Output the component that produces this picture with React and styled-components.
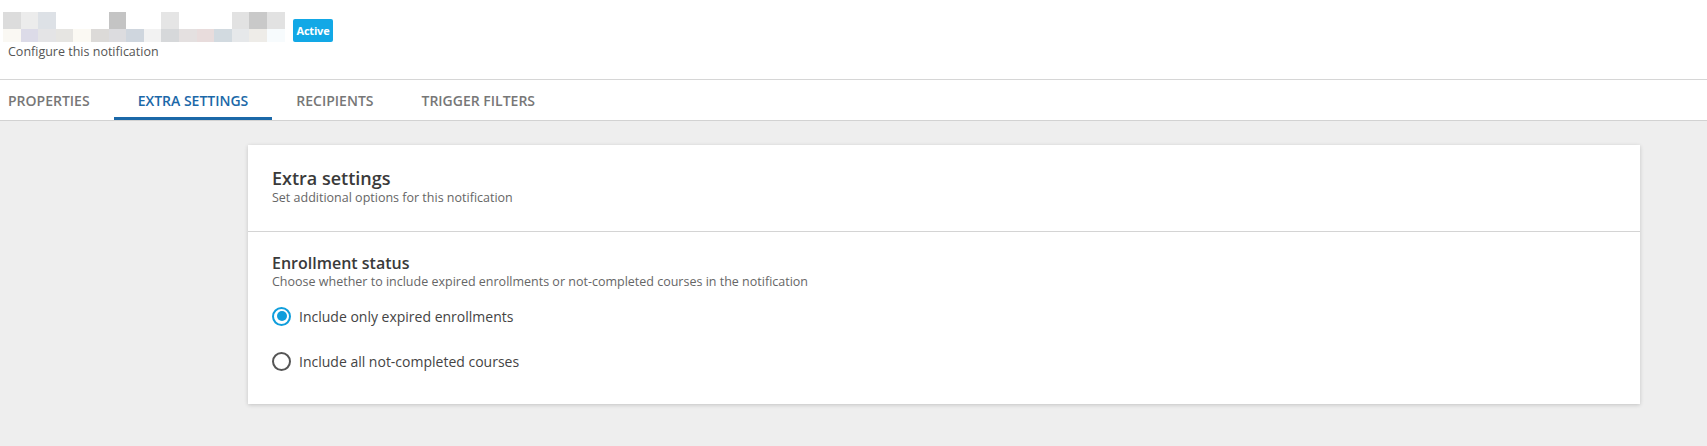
import styled, { createGlobalStyle } from 'styled-components'

const GlobalStyle = createGlobalStyle`
body {
  margin: 0;
  background: #eeeeee;
  font-family: "Open Sans", "Noto Sans", sans-serif;
  color: #333;
}
#root {
  min-height: 446px;
}
`

const Page = styled.div`
min-height: 446px;
background: #eeeeee;
`

const Header = styled.header`
background: #fff;
height: 67px;
padding: 12px 0 0 3px;
border-bottom: 1px solid #d6d6d6;
`

const TitleRow = styled.div`
display: flex;
align-items: flex-end;
gap: 8px;
`

// blurred title, drawn as a mosaic of tiles
const Mosaic = styled.div`
display: grid;
grid-template-columns: repeat(16, 17.6px);
grid-template-rows: 17px 13px;
`

const Tile = styled.span`
background: ${p => p.$c};
`

const Badge = styled.span`
display: inline-flex;
align-items: center;
height: 23px;
padding: 0 4px;
background: #12a8e6;
color: #fff;
font-size: 11px;
font-weight: 700;
letter-spacing: -0.2px;
border-radius: 2px;
`

const Subtitle = styled.div`
margin: 2px 0 0 5px;
font-size: 12.5px;
line-height: 16px;
color: #555;
`

const TabBar = styled.nav`
display: flex;
height: 40px;
background: #fff;
border-bottom: 1px solid #d2d2d2;
`

const Tab = styled.div`
display: flex;
align-items: center;
padding: 0 24px;
font-size: 14px;
font-weight: 600;
text-transform: uppercase;
color: ${p => (p.$active ? '#1b68a8' : '#777')};
box-shadow: ${p => (p.$active ? 'inset 0 -3px 0 #1b68a8' : 'none')};
&:first-child {
  padding-left: 8px;
}
`

const Content = styled.main`
padding: 24px 67px 40px 248px;
`

const Card = styled.section`
background: #fff;
box-shadow: 0 1px 4px rgba(0, 0, 0, 0.18);
`

const CardHead = styled.div`
padding: 22px 20px 25px 24px;
border-bottom: 1px solid #d4d4d4;
`

const CardTitle = styled.h2`
margin: 0;
font-size: 18px;
line-height: 23px;
font-weight: 600;
color: #3a3a3a;
`

const Hint = styled.p`
margin: 0;
font-size: 12.5px;
line-height: 16px;
color: #666;
`

const CardBody = styled.div`
padding: 21px 20px 34px 24px;
`

const SectionTitle = styled.h3`
margin: 0;
font-size: 16px;
line-height: 21px;
font-weight: 600;
color: #3a3a3a;
`

const Options = styled.div`
display: flex;
flex-direction: column;
gap: 27px;
margin-top: 17px;
`

const Option = styled.label`
display: flex;
align-items: center;
gap: 8px;
height: 18px;
font-size: 14px;
color: #444;
`

const Radio = styled.span`
box-sizing: border-box;
width: 19px;
height: 19px;
border-radius: 50%;
border: 2px solid ${p => (p.$checked ? '#0f9edc' : '#555')};
display: flex;
align-items: center;
justify-content: center;
&::after {
  content: "";
  width: 10px;
  height: 10px;
  border-radius: 50%;
  background: ${p => (p.$checked ? '#0f9edc' : 'transparent')};
}
`

const topTiles = ['#dcdcdc', '#ececec', '#dde1e6', '#fff', '#fff', '#fff', '#c4c4c4', '#fff', '#fff', '#e5e5e5', '#fff', '#fff', '#fff', '#e2e2e2', '#c9c9c9', '#e2e2e2']
const bottomTiles = ['#faf8f3', '#dcdbe8', '#e4e4e6', '#e6e5e2', '#fbf9f3', '#dcdad8', '#dcdcdf', '#cfd6de', '#f2f2f2', '#d6d8da', '#e4e0e0', '#e8dcdc', '#d2dae0', '#e6e8ea', '#eeece8', '#f7fbfd']

const tabs = ['Properties', 'Extra settings', 'Recipients', 'Trigger filters']

const App = () => {
    return (
        <Page>
            <GlobalStyle />
            <Header>
                <TitleRow>
                    <Mosaic>
                        {topTiles.concat(bottomTiles).map((c, i) => (
                            <Tile key={i} $c={c} />
                        ))}
                    </Mosaic>
                    <Badge>Active</Badge>
                </TitleRow>
                <Subtitle>Configure this notification</Subtitle>
            </Header>
            <TabBar>
                {tabs.map(t => (
                    <Tab key={t} $active={t === 'Extra settings'}>{t}</Tab>
                ))}
            </TabBar>
            <Content>
                <Card>
                    <CardHead>
                        <CardTitle>Extra settings</CardTitle>
                        <Hint>Set additional options for this notification</Hint>
                    </CardHead>
                    <CardBody>
                        <SectionTitle>Enrollment status</SectionTitle>
                        <Hint>Choose whether to include expired enrollments or not-completed courses in the notification</Hint>
                        <Options>
                            <Option>
                                <Radio $checked />
                                Include only expired enrollments
                            </Option>
                            <Option>
                                <Radio />
                                Include all not-completed courses
                            </Option>
                        </Options>
                    </CardBody>
                </Card>
            </Content>
        </Page>
    )
}

export default App
